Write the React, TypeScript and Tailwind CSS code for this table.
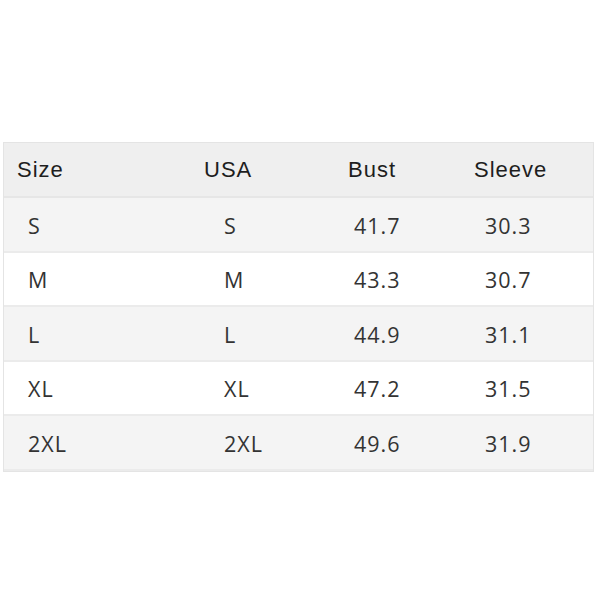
const header = [
  { label: "Size", pad: "pl-[13px]" },
  { label: "USA", pad: "pl-[10px]" },
  { label: "Bust", pad: "pl-[14px]" },
  { label: "Sleeve", pad: "pl-[15px]" },
];

const cellPad = ["pl-[24px]", "pl-[30px]", "pl-[20px]", "pl-[26px]"];

const rows = [
  ["S", "S", "41.7", "30.3"],
  ["M", "M", "43.3", "30.7"],
  ["L", "L", "44.9", "31.1"],
  ["XL", "XL", "47.2", "31.5"],
  ["2XL", "2XL", "49.6", "31.9"],
];

export default function App() {
  return (
    <main className="w-[600px] h-[600px] bg-white pt-[142px] px-[3px]">
      <div className="w-[591px] border border-[#e4e4e4]">
        <div className="grid grid-cols-[190px_140px_125px_1fr] h-[55px] items-center bg-[#efefef] border-b-2 border-[#e6e6e6] text-[22px] tracking-[1px] text-[#1e1e1e] font-['Liberation_Sans',sans-serif]">
          {header.map((h) => (
            <div key={h.label} className={h.pad}>
              {h.label}
            </div>
          ))}
        </div>
        {rows.map((r, i) => (
          <div
            key={r[0]}
            className={
              i % 2 === 0
                ? "grid grid-cols-[190px_140px_125px_1fr] h-[54.5px] pt-[3px] items-center bg-[#f4f4f4] border-b-2 border-[#ebebeb] text-[21.5px] font-medium tracking-[1px] text-[#333] font-['Open_Sans',sans-serif]"
                : "grid grid-cols-[190px_140px_125px_1fr] h-[54.5px] pt-[3px] items-center bg-white border-b-2 border-[#ebebeb] text-[21.5px] font-medium tracking-[1px] text-[#333] font-['Open_Sans',sans-serif]"
            }
          >
            {r.map((c, j) => (
              <div key={j} className={cellPad[j]}>
                {c}
              </div>
            ))}
          </div>
        ))}
      </div>
    </main>
  );
}
